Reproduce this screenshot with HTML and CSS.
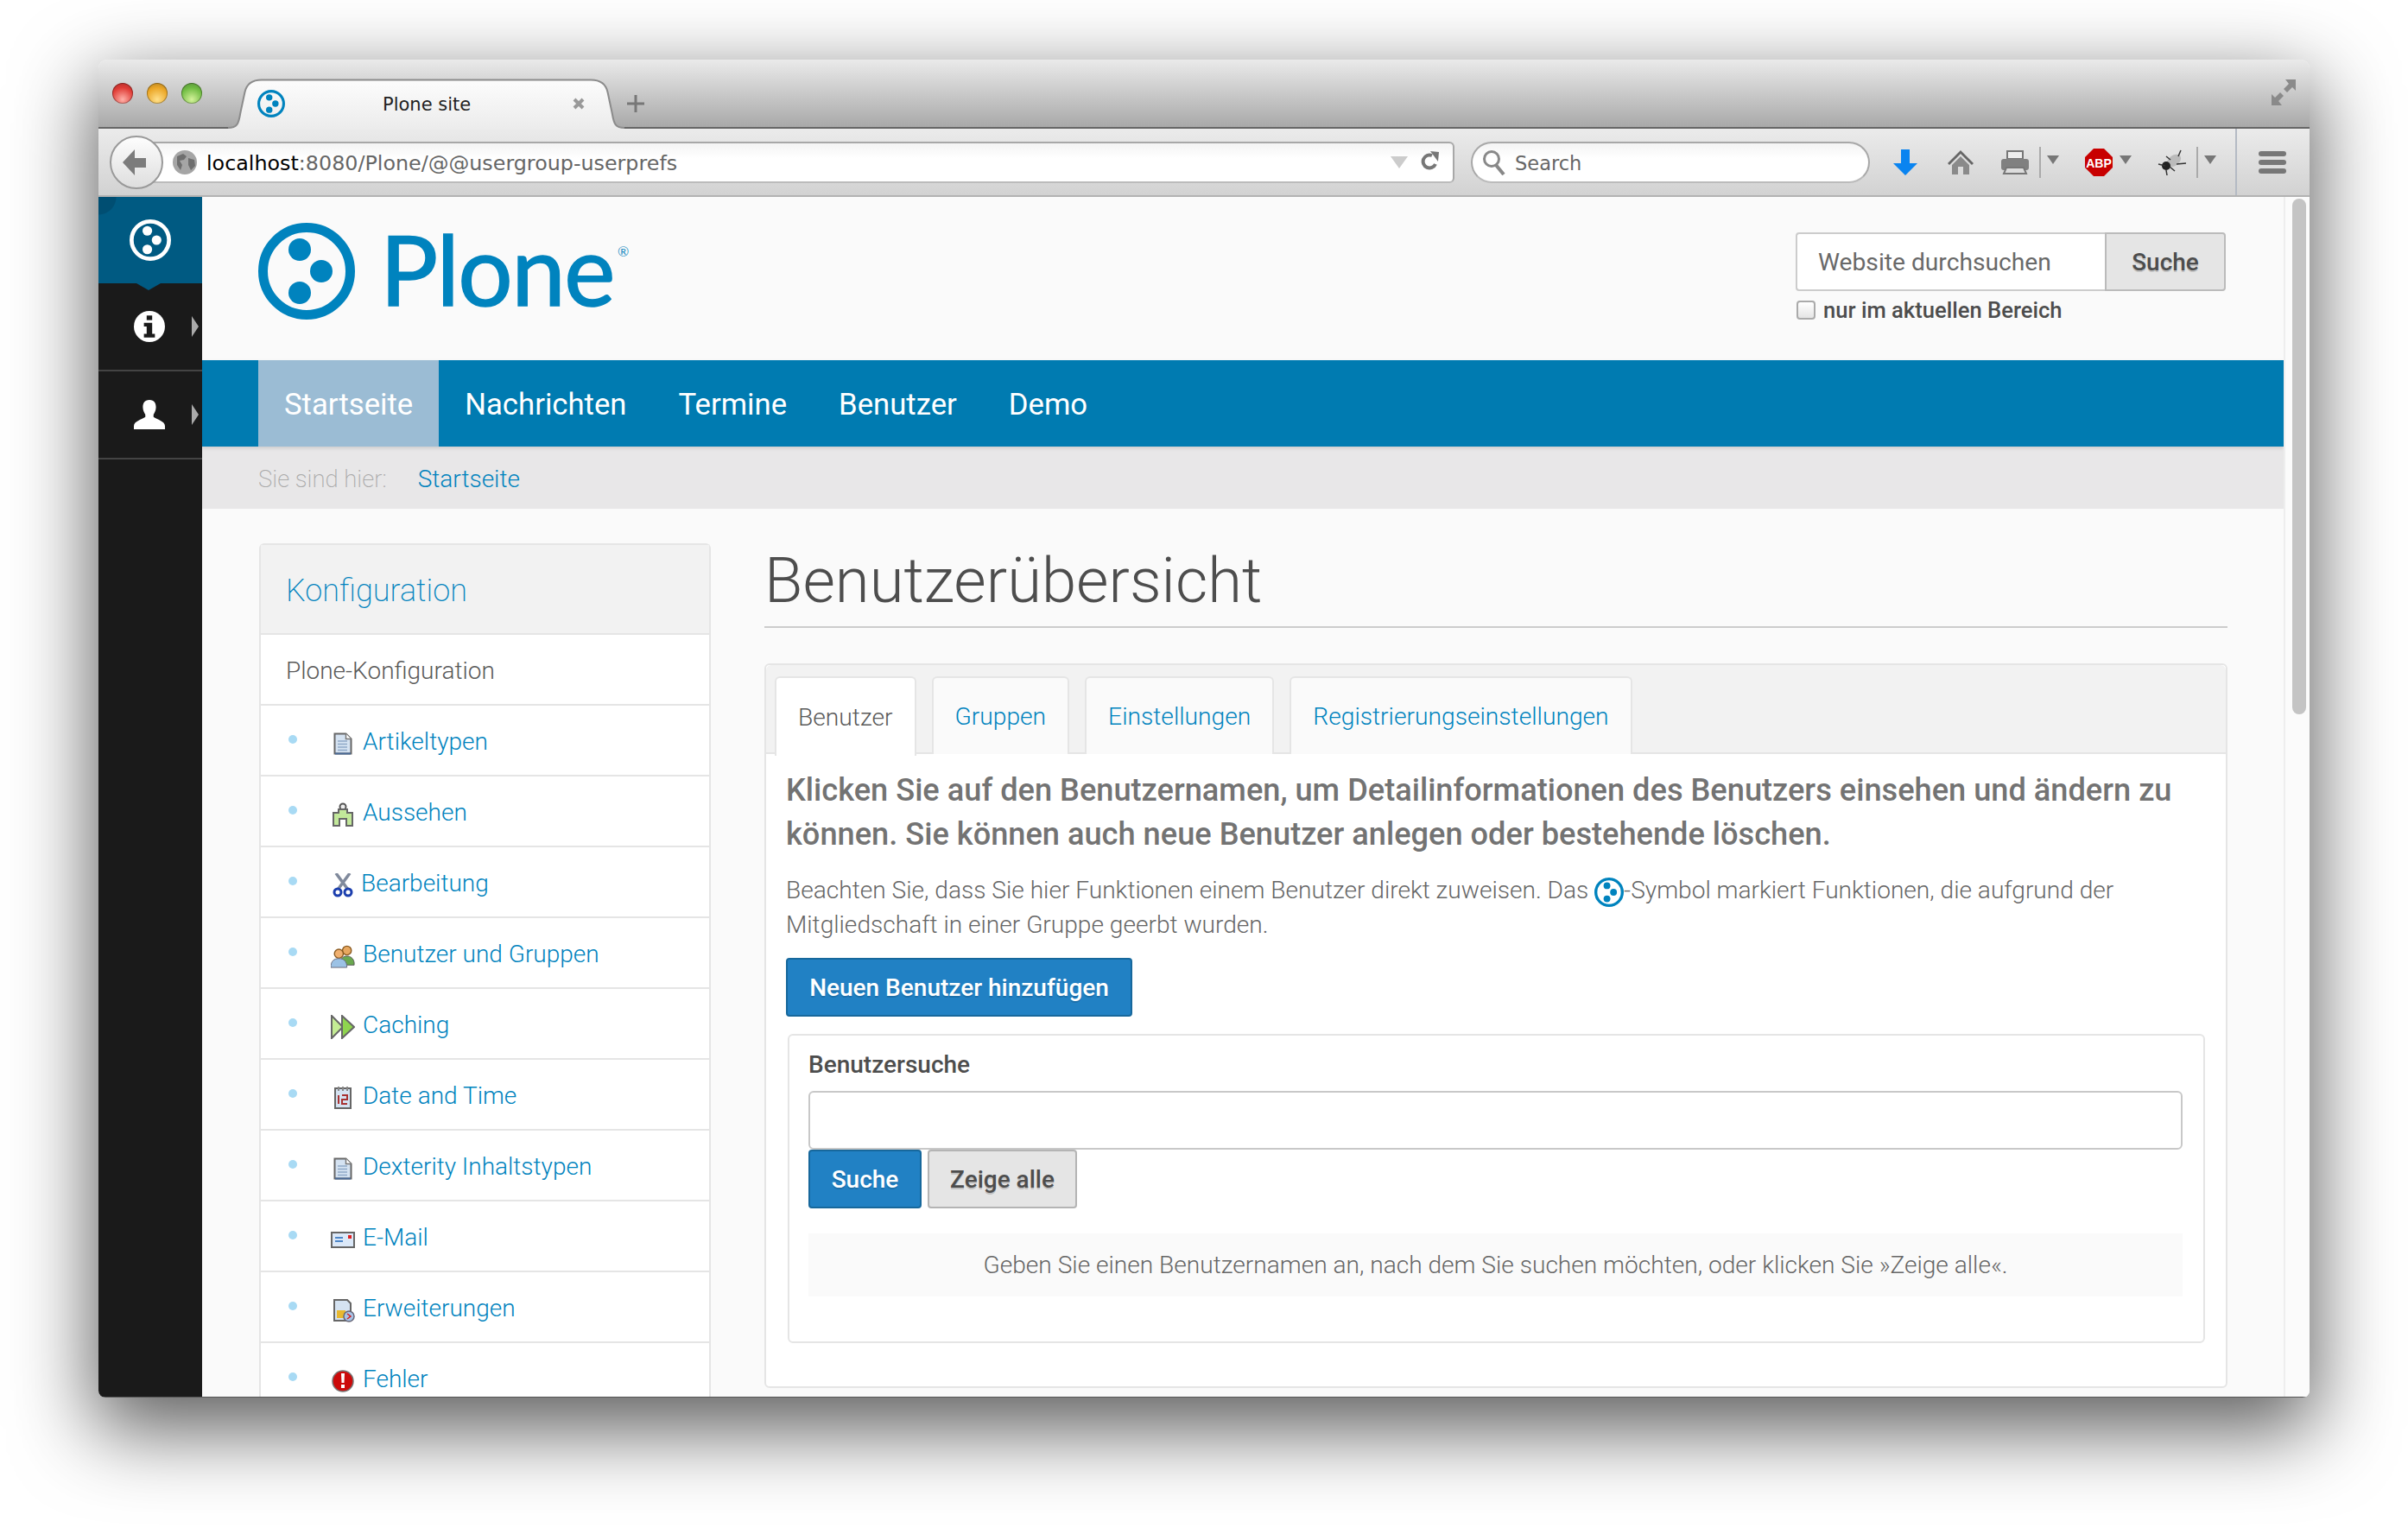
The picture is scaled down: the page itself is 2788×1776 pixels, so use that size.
FILE: index.html
```html
<!DOCTYPE html>
<html lang="de">
<head>
<meta charset="utf-8">
<title>Plone site</title>
<link rel="stylesheet" href="styles.css">
</head>
<body>
<svg class="defs" width="0" height="0">
  <symbol id="plone" viewBox="0 0 112 112">
    <circle cx="56" cy="56" r="50.5" fill="none" stroke="currentColor" stroke-width="11"/>
    <circle cx="48" cy="31" r="13" fill="currentColor"/>
    <circle cx="73" cy="56" r="13" fill="currentColor"/>
    <circle cx="48" cy="81" r="13" fill="currentColor"/>
  </symbol>
  <symbol id="doc" viewBox="0 0 28 28">
    <path d="M4.5 2.5h13l6 6v17h-19z" fill="#d5e3f2" stroke="#666" stroke-width="2"/>
    <path d="M17.5 2.5v6h6" fill="#fff" stroke="#777" stroke-width="1.5"/>
    <path d="M8 11h11M8 14.500h11M8 18h11M8 21.500h11" stroke="#8fa9c8" stroke-width="1.500"/>
    <path d="M5 25.500h18" stroke="#4a6a96" stroke-width="2"/>
  </symbol>
  <symbol id="tri" viewBox="0 0 14 10"><path d="M0 0h14L7 10z" fill="#777"/></symbol>
</svg>
<div class="window">
  <div class="tabbar">
    <span class="light red"></span><span class="light amber"></span><span class="light green"></span>
    <div class="tab">
      <svg class="tab-shape" viewBox="0 0 450 58" preserveAspectRatio="none">
        <defs><linearGradient id="tg" x1="0" y1="0" x2="0" y2="1"><stop offset="0" stop-color="#fcfcfc"/><stop offset="1" stop-color="#ececec"/></linearGradient></defs>
        <path d="M0 57C10 57 12 53 14 40L19 16C21 6 28 1.500 38 1.500H412C422 1.500 429 6 431 16L436 40C438 53 440 57 450 57V58H0Z" fill="url(#tg)"/>
        <path d="M0 57C10 57 12 53 14 40L19 16C21 6 28 1.500 38 1.500H412C422 1.500 429 6 431 16L436 40C438 53 440 57 450 57" fill="none" stroke="#8c8c8c" stroke-width="2"/>
      </svg>
      <svg class="favicon"><use href="#plone"/></svg>
      <span class="tab-title">Plone site</span>
      <svg class="tab-close" viewBox="0 0 16 16"><path d="M3 3l10 10M13 3L3 13" stroke="#999" stroke-width="4"/></svg>
    </div>
    <svg class="newtab" viewBox="0 0 20 20"><path d="M10 0v20M0 10h20" stroke="#777" stroke-width="3"/></svg>
    <svg class="expand" viewBox="0 0 28 30">
      <path d="M16 0h12v13l-4-4-6 6-4-4 6-6z" fill="#8a8a8a"/>
      <path d="M0 30V17l4 4 6-6 4 4-6 6 4 5z" fill="#8a8a8a"/>
    </svg>
  </div>

  <div class="toolbar">
    <div class="back">
      <svg viewBox="0 0 28 30" width="28" height="30"><path d="M14 0L0 15l14 15v-9h13V10H14z" fill="#7c7c7c"/></svg>
    </div>
    <div class="urlbar">
      <svg class="globe" viewBox="0 0 28 28"><circle cx="14" cy="14" r="14" fill="#a5a5a5"/><path d="M5 7l7-3 4 3-3 4-5 1 3 5-2 6-4-6zM18 9l7 2 1 7-5 5-3-6z" fill="#6f6f6f"/></svg>
      <span class="url"><b>localhost</b>:8080/Plone/@@usergroup-userprefs</span>
      <svg class="url-drop" viewBox="0 0 20 14"><path d="M0 0h20L10 14z" fill="#ccc"/></svg>
      <svg class="reload" viewBox="0 0 22 26"><path d="M17 15a7.500 7.500 0 1 1-4-10" fill="none" stroke="#777" stroke-width="4"/><path d="M11 0l10 1-1 11z" fill="#777"/></svg>
    </div>
    <div class="searchbar">
      <svg class="lens" viewBox="0 0 28 30"><circle cx="11" cy="11" r="8.500" fill="none" stroke="#888" stroke-width="3"/><path d="M16 18l9 11" stroke="#888" stroke-width="4"/></svg>
      <span class="search-ph">Search</span>
    </div>
    <svg class="t-down" viewBox="0 0 28 30"><path d="M9 0h10v16h9L14 30 0 16h9z" fill="#0a84f0"/></svg>
    <svg class="t-home" viewBox="0 0 30 28"><path d="M15 0L0 15l2 2L15 4l13 13 2-2z" fill="#666"/><path d="M15 7L5 17v11h7v-9h6v9h7V17z" fill="#8a8a8a"/></svg>
    <svg class="t-print" viewBox="0 0 34 28"><path d="M8 1h18v9H8z" fill="#eee" stroke="#777" stroke-width="2"/><rect x="1" y="10" width="32" height="13" rx="3" fill="#808080"/><path d="M7 20h20l3 7H4z" fill="#ddd" stroke="#777" stroke-width="2"/></svg>
    <span class="t-div t-div1"></span>
    <svg class="t-tri t-tri1"><use href="#tri"/></svg>
    <svg class="t-abp" viewBox="0 0 32 32"><path d="M10 0h12l10 10v12L22 32H10L0 22V10z" fill="#c80000"/><text x="16" y="21.500" text-anchor="middle" class="abp-text">ABP</text></svg>
    <svg class="t-tri t-tri2"><use href="#tri"/></svg>
    <svg class="t-bug" viewBox="0 0 34 30"><ellipse cx="19" cy="13" rx="9" ry="6" fill="#bbb" transform="rotate(-35 19 13)"/><circle cx="10" cy="19" r="5" fill="#222"/><path d="M1 17l8 2M10 24l1 6M14 20l6 5M22 17l11-1M15 12L10 8M24 8l3-7" stroke="#333" stroke-width="1.500" fill="none"/></svg>
    <span class="t-div t-div2"></span>
    <svg class="t-tri t-tri3"><use href="#tri"/></svg>
    <span class="t-sep"></span>
    <svg class="t-menu" viewBox="0 0 32 26"><rect width="32" height="6" rx="3" fill="#777"/><rect y="10" width="32" height="6" rx="3" fill="#777"/><rect y="20" width="32" height="6" rx="3" fill="#777"/></svg>
  </div>

  <div class="viewport">
    <aside class="toolrail">
      <div class="rail-logo"><svg class="rail-plone"><use href="#plone"/></svg></div>
      <div class="rail-item">
        <svg class="rail-icon" viewBox="0 0 34 34"><circle cx="17" cy="17" r="17" fill="#fff"/><rect x="14" y="5" width="6" height="5" fill="#1a1a1a"/><path d="M11 13h9v12h3v4H11v-4h3v-8h-3z" fill="#1a1a1a"/></svg>
      </div>
      <div class="rail-item">
        <svg class="rail-icon" viewBox="0 0 38 36"><path d="M19 0c6 0 8 4 8 9 0 4-2 7-3 9v3c4 3 14 5 14 11v4H0v-4c0-6 10-8 14-11v-3c-1-2-3-5-3-9 0-5 2-9 8-9z" fill="#fff"/></svg>
      </div>
    </aside>

    <main class="page">
      <header class="site-head">
        <div class="brand">
          <svg class="brand-mark"><use href="#plone"/></svg>
          <span class="brand-word">Plone</span><span class="brand-reg">®</span>
        </div>
        <form class="site-search">
          <div class="search-row">
            <span class="search-input">Website durchsuchen</span>
            <span class="search-btn">Suche</span>
          </div>
          <label class="search-scope"><span class="checkbox"></span>nur im aktuellen Bereich</label>
        </form>
      </header>

      <nav class="mainnav">
        <a class="active">Startseite</a><a>Nachrichten</a><a>Termine</a><a>Benutzer</a><a>Demo</a>
      </nav>

      <div class="crumbs"><span class="crumbs-label">Sie sind hier:</span><a class="crumbs-link">Startseite</a></div>

      <div class="columns">
        <section class="portlet">
          <h2 class="portlet-head">Konfiguration</h2>
          <div class="portlet-sub">Plone-Konfiguration</div>
          <ul class="portlet-list">
            <li><span class="dot"></span><svg class="ico"><use href="#doc"/></svg><a>Artikeltypen</a></li>
            <li><span class="dot"></span>
              <svg class="ico" viewBox="0 0 28 28"><circle cx="14" cy="5" r="3.500" fill="#eee" stroke="#555" stroke-width="2"/><path d="M9 8h10v4h6v15h-7v-8h-8v8H3V12h6z" fill="#c2e89a" stroke="#666" stroke-width="2"/></svg>
              <a>Aussehen</a></li>
            <li class="tight"><span class="dot"></span>
              <svg class="ico" viewBox="0 0 28 28"><path d="M6 0l14 19M22 0L8 19" stroke="#808a9c" stroke-width="3.500"/><circle cx="8" cy="22" r="4" fill="#fff" stroke="#1c3fae" stroke-width="3"/><circle cx="20" cy="22" r="4" fill="#fff" stroke="#1c3fae" stroke-width="3"/></svg>
              <a>Bearbeitung</a></li>
            <li><span class="dot"></span>
              <svg class="ico" viewBox="0 0 30 28"><circle cx="20" cy="7" r="5.500" fill="#e8a860" stroke="#8a5a20" stroke-width="1.500"/><path d="M12 22c0-6 4-8 8-8s8 2 9 8v3H12z" fill="#6aa84f" stroke="#555"/><circle cx="10" cy="11" r="5.500" fill="#f0b070" stroke="#8a5a20" stroke-width="1.500"/><path d="M0 28c0-8 4-11 10-11s10 3 10 11z" fill="#9cc2e5" stroke="#667"/></svg>
              <a>Benutzer und Gruppen</a></li>
            <li><span class="dot"></span>
              <svg class="ico" viewBox="0 0 28 28"><path d="M1 1l13 13L1 27z" fill="#c4ec94" stroke="#666" stroke-width="2"/><path d="M13 1l14 13-14 13z" fill="#8fd44f" stroke="#666" stroke-width="2"/></svg>
              <a>Caching</a></li>
            <li><span class="dot"></span>
              <svg class="ico" viewBox="0 0 28 28"><path d="M5 3h18v23H5z" fill="#d5e3f2" stroke="#666" stroke-width="2"/><path d="M9 1v5M14 1v5M19 1v5" stroke="#888" stroke-width="2"/><path d="M9 11v10M13 11h6v5h-6v5h6" fill="none" stroke="#a83232" stroke-width="2"/></svg>
              <a>Date and Time</a></li>
            <li><span class="dot"></span><svg class="ico"><use href="#doc"/></svg><a>Dexterity Inhaltstypen</a></li>
            <li><span class="dot"></span>
              <svg class="ico" viewBox="0 0 28 28"><rect x="1" y="6" width="26" height="17" fill="#dbe8f8" stroke="#666" stroke-width="2"/><path d="M5 12h9M5 16h9" stroke="#4d86c8" stroke-width="2"/><rect x="20" y="9" width="4" height="4" fill="#e02020"/></svg>
              <a>E-Mail</a></li>
            <li><span class="dot"></span>
              <svg class="ico" viewBox="0 0 28 28"><path d="M4 2h15l4 4v20H4z" fill="#d5e3f2" stroke="#666" stroke-width="2"/><rect x="7" y="14" width="10" height="9" fill="#e8b830"/><circle cx="21" cy="21" r="6" fill="#a8c4e8" stroke="#667" stroke-width="1.500"/><path d="M19 18l4 3-4 3" fill="none" stroke="#d02020" stroke-width="1.500"/></svg>
              <a>Erweiterungen</a></li>
            <li><span class="dot"></span>
              <svg class="ico" viewBox="0 0 28 28"><circle cx="14" cy="14" r="12" fill="#cc0a0a" stroke="#777" stroke-width="1.500"/><path d="M12 5h4l-.5 11h-3z" fill="#fff"/><rect x="12" y="18" width="4" height="4" fill="#fff"/></svg>
              <a>Fehler</a></li>
          </ul>
        </section>

        <section class="content">
          <h1 class="title">Benutzerübersicht</h1>
          <div class="tabpanel">
            <div class="tabs">
              <a class="tabitem current">Benutzer</a>
              <a class="tabitem">Gruppen</a>
              <a class="tabitem">Einstellungen</a>
              <a class="tabitem">Registrierungseinstellungen</a>
            </div>
            <div class="panelbody">
              <p class="lead">Klicken Sie auf den Benutzernamen, um Detailinformationen des Benutzers einsehen und ändern zu können. Sie können auch neue Benutzer anlegen oder bestehende löschen.</p>
              <p class="note">Beachten Sie, dass Sie hier Funktionen einem Benutzer direkt zuweisen. Das <svg class="inline-mark"><use href="#plone"/></svg>-Symbol markiert Funktionen, die aufgrund der<br>Mitgliedschaft in einer Gruppe geerbt wurden.</p>
              <span class="btn btn-primary btn-add">Neuen Benutzer hinzufügen</span>
              <fieldset class="userfind">
                <div class="legend">Benutzersuche</div>
                <div class="textfield"></div>
                <div class="actions">
                  <span class="btn btn-primary btn-find">Suche</span>
                  <span class="btn btn-grey">Zeige alle</span>
                </div>
                <div class="hint">Geben Sie einen Benutzernamen an, nach dem Sie suchen möchten, oder klicken Sie »Zeige alle«.</div>
              </fieldset>
            </div>
          </div>
        </section>
      </div>
    </main>

    <div class="scrolltrack"><div class="scrollthumb"></div></div>
  </div>
</div>
</body>
</html>
```
FILE: styles.css
```css
* { box-sizing: border-box; }
html, body { margin: 0; height: 1776px; overflow: hidden; background: #fff; }
body { padding-top: 69px; font-family: Roboto, "Liberation Sans", sans-serif; }
.defs { position: absolute; }
a { color: #0083be; }
p { margin: 0; }
ul { margin: 0; padding: 0; list-style: none; }

.window {
  width: 2560px; height: 1549px; margin: 0 auto 0 114px;
  border-radius: 10px 10px 8px 8px; overflow: hidden;
  display: flex; flex-direction: column;
  box-shadow: 0 32px 92px 6px rgba(0,0,0,.63);
  background: #fafafa;
}

/* browser tab strip */
.tabbar {
  height: 80px; flex: none; display: flex; align-items: center; padding-left: 16px;
  background: linear-gradient(#eaeaea, #a9a9a9);
  border-bottom: 2px solid #666;
}
.light { width: 24px; height: 24px; border-radius: 50%; margin-right: 16px; flex: none; box-shadow: inset 0 0 0 1px rgba(0,0,0,.3); }
.red { background: radial-gradient(circle at 50% 80%, #ffb0a8, #e03c36 60%, #a52a28); }
.amber { background: radial-gradient(circle at 50% 80%, #ffe08a, #eba626 60%, #a87c22); }
.green { background: radial-gradient(circle at 50% 80%, #d4f29a, #70bc42 60%, #55883c); }
.tab {
  position: relative; width: 459px; height: 58px; margin: 0 0 -2px 14px; align-self: flex-end;
  display: flex; align-items: center; padding: 0 45px 0 34px;
}
.tab-shape { position: absolute; left: 0; top: 0; width: 100%; height: 100%; }
.favicon { position: relative; width: 32px; height: 32px; color: #0083be; flex: none; }
.tab-title { position: relative; margin: 2px 0 0 113px; font: 21px "DejaVu Sans", sans-serif; color: #222; white-space: nowrap; }
.tab-close { position: relative; width: 16px; height: 16px; margin-left: auto; }
.newtab { width: 20px; height: 20px; margin: 24px 0 0 3px; flex: none; }
.expand { width: 28px; height: 30px; margin: -2px 16px 0 auto; flex: none; }

/* browser toolbar */
.toolbar {
  height: 79px; flex: none; display: flex; align-items: center; padding-left: 13px;
  background: linear-gradient(#ebebeb, #d2d2d2);
  border-bottom: 2px solid #b2b2b2;
}
.back {
  position: relative; z-index: 1; width: 62px; height: 62px; border-radius: 50%; flex: none;
  border: 2px solid #999; background: linear-gradient(#fdfdfd, #dedede);
  display: flex; align-items: center; justify-content: center; padding-right: 4px;
}
.urlbar {
  width: 1511px; height: 48px; margin-left: -16px; padding: 0 15px 0 27px; flex: none;
  display: flex; align-items: center;
  background: linear-gradient(#f4f4f4, #fff 40%);
  border: 2px solid #a8a8a8; border-bottom-color: #bbb; border-left: 0; border-radius: 0 6px 6px 0;
}
.globe { width: 28px; height: 28px; flex: none; }
.url { margin: 2px 0 0 11px; font: 23.800px "DejaVu Sans", sans-serif; color: #666; white-space: nowrap; }
.url b { font-weight: 400; color: #000; }
.url-drop { width: 20px; height: 14px; margin-left: auto; }
.reload { width: 22px; height: 26px; margin-left: 15px; }
.searchbar {
  width: 462px; height: 48px; margin-left: 19px; padding-left: 11px; flex: none;
  display: flex; align-items: center; border-radius: 24px;
  border: 2px solid #a8a8a8; border-bottom-color: #bbb;
  background: linear-gradient(#f4f4f4, #fff 40%);
}
.lens { width: 28px; height: 30px; flex: none; }
.search-ph { margin: 2px 0 0 10px; font: 22.500px "DejaVu Sans", sans-serif; color: #666; }
.toolbar > svg { flex: none; }
.t-down { width: 28px; height: 30px; margin-left: 27px; }
.t-home { width: 30px; height: 28px; margin-left: 35px; }
.t-print { width: 34px; height: 28px; margin-left: 31px; }
.t-div { width: 2px; height: 36px; background: #aaa; flex: none; }
.t-div1 { margin-left: 11px; }
.t-div2 { margin-left: 11px; }
.t-tri { width: 14px; height: 10px; margin-top: -6px; }
.t-tri1 { margin-left: 7px; }
.t-tri2 { margin-left: 8px; }
.t-tri3 { margin-left: 7px; }
.t-abp { width: 32px; height: 32px; margin-left: 30px; }
.abp-text { font: 700 14px "Liberation Sans", sans-serif; fill: #fff; }
.t-bug { width: 34px; height: 30px; margin-left: 30px; }
.t-sep { width: 2px; height: 77px; margin-left: 22px; background: #b4bac4; flex: none; }
.t-menu { width: 32px; height: 26px; margin-left: 25px; }

/* page area */
.viewport { flex: 1; min-height: 0; display: flex; border-bottom: 1px solid #555; }
.toolrail { width: 120px; flex: none; background: #1a1a1a; }
.rail-logo {
  position: relative; height: 100px;
  background: radial-gradient(circle at 0 0, #004e72 20px, #005a82 21px);
  display: flex; align-items: center; justify-content: center;
}
.rail-logo::after {
  content: ""; position: absolute; left: 44px; top: 100px;
  border: 14px solid transparent; border-top: 8px solid #005a82; border-bottom: 0;
}
.rail-plone { width: 48px; height: 48px; color: #fff; position: relative; }
.rail-item {
  position: relative; height: 102px; border-bottom: 2px solid #444;
  display: flex; align-items: center; justify-content: center; padding-right: 2px;
}
.rail-item::after {
  content: ""; position: absolute; left: 108px; top: 38px;
  border: 12px solid transparent; border-left: 8px solid #aaa; border-right: 0;
}
.rail-icon { width: 36px; height: 36px; }

.page { flex: 1; min-width: 0; overflow: hidden; background: #fafafa; }
.site-head { height: 189px; padding: 41px 67px 0 65px; display: flex; justify-content: space-between; }
.brand { display: flex; align-items: flex-start; margin-top: -11px; }
.brand-mark { width: 112px; height: 112px; color: #0083be; flex: none; }
.brand-word {
  margin: -3px 0 0 29px; font: 400 112px/112px Lato, sans-serif; letter-spacing: -1.500px; color: #0083be;
  -webkit-text-stroke: 1.500px #0083be;
}
.brand-reg { margin: 24px 0 0 4px; font: 400 16px/18px Lato, sans-serif; color: #2a90c4; }
.site-search { width: 498px; }
.search-row { display: flex; height: 68px; }
.search-input {
  flex: 1; padding-left: 24px; display: flex; align-items: center;
  background: #fff; border: 2px solid #ccc; border-right: 0; border-radius: 4px 0 0 4px;
  font-size: 28.200px; font-weight: 400; color: #696969;
}
.search-btn {
  width: 140px; display: flex; align-items: center; justify-content: center;
  background: #e5e5e5; border: 2px solid #bbb; border-radius: 0 4px 4px 0;
  font-size: 28px; font-weight: 500; color: #4d4d4d; text-shadow: 0 2px 0 rgba(0,0,0,.18);
}
.search-scope { display: flex; align-items: center; margin-top: 7px; font-size: 25.600px; font-weight: 500; color: #4d4d4d; }
.checkbox {
  width: 22px; height: 22px; margin: 0 9px 0 1px; border: 2px solid #aaa; border-radius: 4px;
  background: linear-gradient(#fff, #e4e4e4);
}

.mainnav {
  height: 100px; padding-left: 65px; display: flex; background: #007bb1;
  box-shadow: 0 2px 4px rgba(0,0,0,.12); position: relative;
}
.mainnav a { padding: 2px 30px 0; display: flex; align-items: center; font-size: 34.700px; color: #fff; }
.mainnav a.active { background: #9bbcd4; }

.crumbs { height: 72px; padding: 2px 0 0 65px; display: flex; align-items: center; background: #e8e7e8; font-size: 28px; }
.crumbs-label { color: #aaa; font-weight: 200; font-size: 27.500px; }
.crumbs-link { margin-left: 36px; font-weight: 300; }

.columns { display: flex; gap: 62px; padding: 40px 65px 0 66px; align-items: flex-start; }

.portlet { width: 523px; flex: none; background: #fff; border: 2px solid #e5e5e5; border-bottom: 0; border-radius: 6px 6px 0 0; }
.portlet-head {
  height: 104px; margin: 0; padding: 4px 0 0 29px; display: flex; align-items: center;
  background: #f2f2f2; border-bottom: 2px solid #e5e5e5;
  font-size: 36px; font-weight: 200; color: #0083be;
}
.portlet-sub {
  height: 82px; padding: 2px 0 0 29px; display: flex; align-items: center; border-bottom: 2px solid #e5e5e5;
  font-size: 28px; font-weight: 300; color: #5a5a5a;
}
.portlet-list li {
  height: 82px; padding: 3px 0 0 32px; display: flex; align-items: center; border-bottom: 2px solid #e5e5e5;
  font-size: 28px; font-weight: 300;
}
.dot { width: 10px; height: 10px; border-radius: 50%; background: #a8daf4; margin-top: -6px; flex: none; }
.ico { width: 28px; height: 28px; margin: 4px 9px 0 39px; flex: none; }
.portlet-list li.tight .ico { margin-right: 7px; }

.content { flex: 1; min-width: 0; }
.title {
  height: 98px; margin: 0 0 41px; border-bottom: 2px solid #ccc;
  font-size: 72.400px; line-height: 88px; font-weight: 300; color: #4d4d4d;
}
.tabpanel { background: #fff; border: 2px solid #e5e5e5; border-radius: 6px; height: 839px; }
.tabs { height: 103px; padding: 13px 0 0 10px; display: flex; gap: 18px; background: #f2f2f2; border-bottom: 2px solid #e5e5e5; border-radius: 6px 6px 0 0; }
.tabitem {
  height: 90px; padding: 0 25px; display: flex; align-items: center;
  background: #fafafa; border: 2px solid #e5e5e5; border-bottom: 0; border-radius: 6px 6px 0 0;
  font-size: 28.200px; font-weight: 300;
}
.tabitem.current { height: 92px; background: #fff; color: #5a5a5a; position: relative; }
.panelbody { padding: 16px 23px 0; }
.lead { font-size: 36.200px; line-height: 51px; font-weight: 500; color: #737373; }
.note { margin-top: 20px; font-size: 28.100px; line-height: 40px; font-weight: 300; color: #666; }
.inline-mark { width: 34px; height: 34px; color: #0083be; vertical-align: -10px; }
.btn {
  display: inline-flex; align-items: center; justify-content: center; height: 68px;
  border-radius: 4px; font-size: 28px; font-weight: 500;
}
.btn-primary { background: #2181c4; border: 2px solid #17689c; color: #fff; text-shadow: 0 2px 0 rgba(0,0,0,.15); }
.btn-add { width: 401px; margin-top: 18px; }
.btn-find { width: 131px; }
.btn-grey { width: 173px; background: #e5e5e5; border: 2px solid #b4b4b4; color: #4d4d4d; text-shadow: 0 2px 0 rgba(0,0,0,.18); }
.userfind {
  margin: 20px 0 0 2px; padding: 0 24px 0 22px; width: 1641px; height: 358px; min-width: 0;
  border: 2px solid #e5e5e5; border-radius: 6px; background: #fff;
}
.legend { padding-top: 12px; height: 64px; font-size: 28px; line-height: 44px; font-weight: 500; color: #4d4d4d; }
.textfield { height: 68px; background: #fff; border: 2px solid #c8c8c8; border-radius: 6px; }
.actions { display: flex; gap: 7px; }
.hint {
  height: 73px; margin-top: 29px; display: flex; align-items: center; justify-content: center;
  background: #fafafa; font-size: 28.100px; font-weight: 300; color: #666;
}

.scrolltrack { width: 30px; flex: none; padding: 2px 0 0 8px; background: #fbfbfb; border-left: 2px solid #eee; }
.scrollthumb { width: 16px; height: 597px; border-radius: 8px; background: #c4c4c4; }
```
